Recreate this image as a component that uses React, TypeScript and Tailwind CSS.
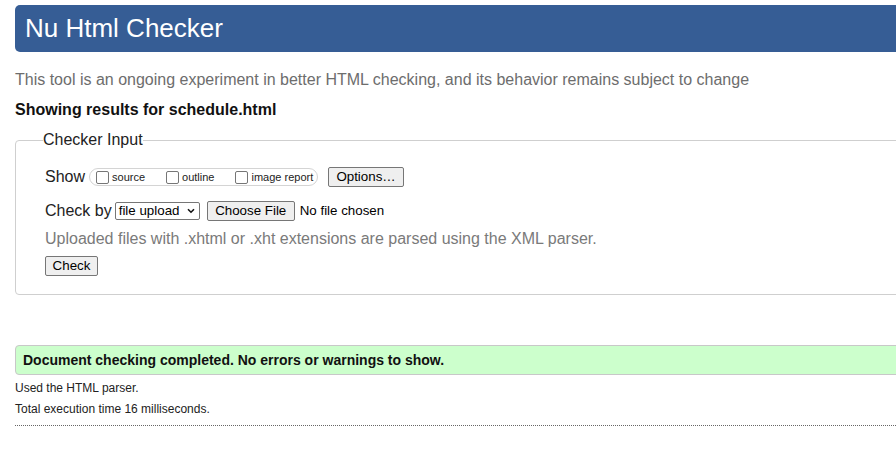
import React from "react";

const FONT = { fontFamily: '"Liberation Sans", Arial, sans-serif' };

function Box({ label }: { label: string }) {
  return (
    <span className="flex items-center">
      <span className="w-[13px] h-[13px] border border-[#767676] rounded-[2px] bg-white" />
      <span className="ml-[3px] text-[11px] leading-[14px] text-[#222]">{label}</span>
    </span>
  );
}

const btn =
  "h-[20px] border border-[#767676] rounded-[2px] bg-[#efefef] text-[13.33px] leading-[16px] text-black flex items-center justify-center";

export default function App() {
  return (
    <div className="w-[896px] h-[470px] overflow-hidden bg-white" style={FONT}>
      <div className="w-[1000px] pl-[15px] pt-[5px]">
        {/* title bar */}
        <div className="h-[47px] bg-[#365d95] rounded-l-[5px] flex items-center pl-[10px]">
          <h1 className="text-[26px] leading-[30px] text-white pb-[1px]">Nu Html Checker</h1>
        </div>

        <p className="mt-[18px] text-[16px] leading-[20px] text-[#6d6d6d]">
          This tool is an ongoing experiment in better HTML checking, and its behavior remains subject to change
        </p>
        <p className="mt-[10px] text-[16px] leading-[20px] font-bold text-[#111]">Showing results for schedule.html</p>

        {/* checker input */}
        <fieldset className="mt-[11px] border border-[#cfcfcf] rounded-[4px] pl-[29px] pb-[18px]">
          <legend className="-ml-[2px] text-[16px] leading-[18px] text-[#222]">Checker Input</legend>

          <div className="mt-[18px] flex items-center h-[20px]">
            <span className="text-[16px] leading-[20px] text-[#222]">Show</span>
            <div className="ml-[4px] h-[18px] w-[229px] border border-[#d4d4d4] rounded-[9px] flex items-center pl-[6px] gap-[21px]">
              <Box label="source" />
              <Box label="outline" />
              <Box label="image report" />
            </div>
            <button className={`${btn} ml-[10px] w-[76px]`}>Options…</button>
          </div>

          <div className="mt-[14px] flex items-center h-[20px]">
            <span className="text-[16px] leading-[20px] text-[#222]">Check by</span>
            <div className="ml-[3px] w-[85px] h-[18px] border border-[#767676] rounded-[2px] bg-white flex items-center pl-[3px] pr-[4px] justify-between">
              <span className="text-[13.33px] leading-[16px] text-black">file upload</span>
              <svg width="8" height="6" viewBox="0 0 8 6">
                <path d="M1 1.2 L4 4.2 L7 1.2" fill="none" stroke="#111" strokeWidth="1.6" />
              </svg>
            </div>
            <button className={`${btn} ml-[7px] w-[88px]`}>Choose File</button>
            <span className="ml-[5px] text-[13.33px] leading-[16px] text-black">No file chosen</span>
          </div>

          <p className="mt-[8px] text-[16px] leading-[20px] text-[#7a7a7a]">
            Uploaded files with .xhtml or .xht extensions are parsed using the XML parser.
          </p>

          <button className={`${btn} mt-[7px] w-[53px]`}>Check</button>
        </fieldset>

        {/* result */}
        <div className="mt-[50px] h-[30px] bg-[#ccffcc] border border-[#c8c8c8] rounded-l-[4px] flex items-center pl-[7px]">
          <span className="text-[14px] leading-[18px] font-bold text-[#111]">
            Document checking completed. No errors or warnings to show.
          </span>
        </div>

        <p className="mt-[6px] text-[12px] leading-[14px] text-[#222]">Used the HTML parser.</p>
        <p className="mt-[7px] text-[12px] leading-[14px] text-[#222]">Total execution time 16 milliseconds.</p>

        <div className="mt-[9px] w-[881px] border-t border-dotted border-[#666]" />
      </div>
    </div>
  );
}
